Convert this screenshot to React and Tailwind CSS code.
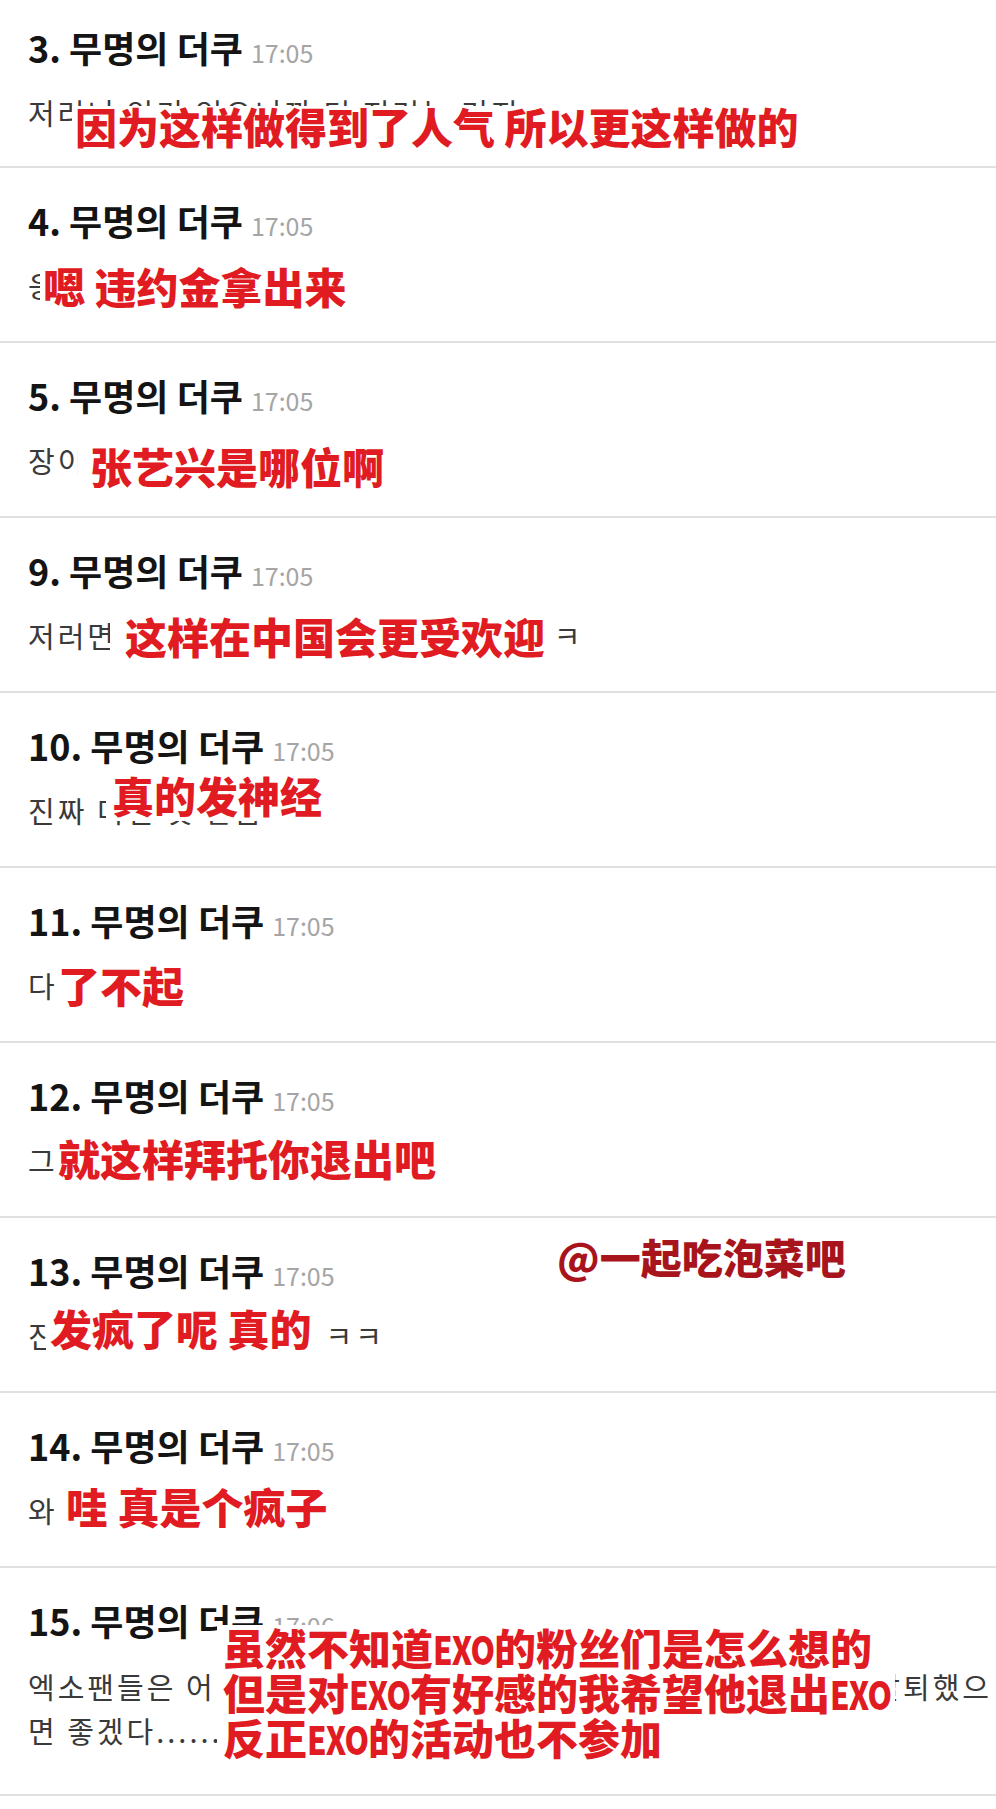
import React from 'react';

const comments = [
  {
    no: '3',
    time: '17:05',
    rowClass: 'pt-[25px] pb-[33px]',
    lines: ['저러니 인기 얻으니까 더 저러는 거지'],
    boxClass: 'left-[72px] top-[106px] pl-[3px] pr-[8px] pb-[6px]',
    red: ['因为这样做得到了人气 所以更这样做的'],
  },
  {
    no: '4',
    time: '17:05',
    lines: ['응 위약금 물고 나가라'],
    boxClass: 'left-[40px] top-[90px] pl-[3px] pr-[6px] pt-[8px] pb-[10px]',
    red: ['嗯 违约金拿出来'],
  },
  {
    no: '5',
    time: '17:05',
    lines: ['장이씽이 누구임'],
    boxClass: 'left-[78px] top-[101px] pl-[12px] pr-[10px] pt-[2px] pb-[10px]',
    red: ['张艺兴是哪位啊'],
  },
  {
    no: '9',
    time: '17:05',
    lines: ['저러면 중국에서 인기 더 많아지겠지... ㅋ'],
    boxClass: 'left-[110px] top-[94px] pl-[15px] pr-[4px] pt-[4px] pb-[10px]',
    red: ['这样在中国会更受欢迎'],
  },
  {
    no: '10',
    time: '17:05',
    lines: ['진짜 미친 것 같음'],
    boxClass: 'left-[106px] top-[80px] pl-[6px] pr-[8px] pt-[2px] pb-[6px]',
    red: ['真的发神经'],
  },
  {
    no: '11',
    time: '17:05',
    lines: ['다 대단하다'],
    boxClass: 'left-[55px] top-[91px] pl-[3px] pr-[10px] pt-[6px] pb-[8px]',
    red: ['了不起'],
  },
  {
    no: '12',
    time: '17:05',
    lines: ['그냥 그렇게 제발 탈퇴해 줘'],
    boxClass: 'left-[54px] top-[89px] pl-[4px] pr-[6px] pt-[6px] pb-[8px]',
    red: ['就这样拜托你退出吧'],
  },
  {
    no: '13',
    time: '17:05',
    lines: ['진짜 완전 미쳤나 봐.. ㅋㅋ'],
    boxClass: 'left-[46px] top-[84px] pl-[4px] pr-[3px] pt-[6px] pb-[8px]',
    red: ['发疯了呢 真的'],
    tag: '@一起吃泡菜吧',
  },
  {
    no: '14',
    time: '17:05',
    lines: ['와 진짜 미친놈이네'],
    boxClass: 'left-[62px] top-[87px] pl-[4px] pr-[6px] pt-[6px] pb-[8px]',
    red: ['哇 真是个疯子'],
  },
  {
    no: '15',
    time: '17:06',
    rowClass: 'pt-[30px] pb-[42px]',
    bodyClass: 'mt-[22px] leading-[44px]',
    split: ['엑소팬들은 어떻게 생각할지 모르겠지만', '레이가 엑소 탈퇴했으'],
    lines: ['면 좋겠다......'],
    boxClass: 'left-[217px] top-[57px] pl-[6px] pr-[4px] pb-[10px] leading-[44px]',
    red: [
      ['虽然不知道', 'EXO', '的粉丝们是怎么想的'],
      ['但是对', 'EXO', '有好感的我希望他退出', 'EXO'],
      ['反正', 'EXO', '的活动也不参加'],
    ],
  },
];

const RedLine = ({ parts }) => {
  if (typeof parts === 'string') return <div>{parts}</div>;
  return (
    <div>
      {parts.map((p, i) =>
        p === 'EXO' ? (
          <span key={i} className="inline-block w-[61px] whitespace-nowrap">
            <span className="inline-block origin-left scale-x-[0.8] text-[39px] tracking-[-1px]">EXO</span>
          </span>
        ) : (
          <span key={i}>{p}</span>
        )
      )}
    </div>
  );
};

const Comment = ({ c }) => {
  return (
    <div className={`relative border-b-2 border-[#e0e0e0] pl-[28px] pr-[4px] ${c.rowClass || 'pt-[30px] pb-[35px]'}`}>
      <div className="flex items-baseline h-[44px] leading-[44px]">
        <span className="text-[36px] font-bold text-[#141414]">{c.no}. 무명의 더쿠</span>
        <span className="ml-[8px] text-[25px] text-[#a5a5a5]">{c.time}</span>
      </div>
      <div className={`${c.bodyClass || 'mt-[23px] leading-[41px]'} text-[29px] tracking-[3px] text-[#3a3a3a]`}>
        {c.split && (
          <div className="flex justify-between whitespace-nowrap">
            <span>{c.split[0]}</span>
            <span>{c.split[1]}</span>
          </div>
        )}
        {c.lines.map((l, i) => (
          <div key={i} className="whitespace-nowrap">{l}</div>
        ))}
      </div>

      <div
        className={`absolute bg-white font-['Noto_Sans_CJK_SC','Noto_Sans_CJK_KR',sans-serif] text-[42px] leading-[40px] font-black text-[#e01b22] whitespace-nowrap ${c.boxClass}`}
      >
        {c.red.map((r, i) => (
          <RedLine key={i} parts={r} />
        ))}
      </div>

      {c.tag && (
        <div className="absolute left-[550px] top-[14px] bg-white pl-[7px] pr-[10px] py-[4px] font-['Noto_Sans_CJK_SC',sans-serif] text-[41px] leading-[40px] font-black text-[#a8141c]">
          {c.tag}
        </div>
      )}
    </div>
  );
};

export default function App() {
  return (
    <div className="w-[996px] min-h-[1809px] bg-white font-['Noto_Sans_CJK_KR','Noto_Sans_CJK_SC',sans-serif]">
      {comments.map((c) => (
        <Comment key={c.no} c={c} />
      ))}
    </div>
  );
}
